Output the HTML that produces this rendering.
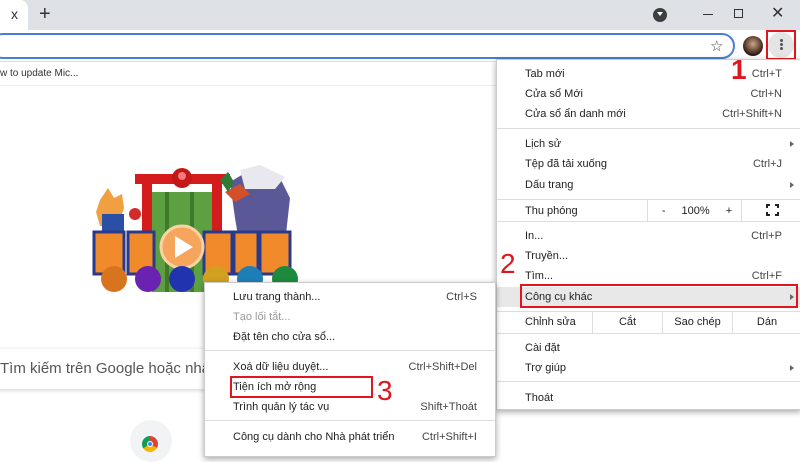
<!DOCTYPE html>
<html><head><meta charset="utf-8">
<style>
*{margin:0;padding:0;box-sizing:border-box}
body{width:800px;height:450px;overflow:hidden;background:#fff;font-family:"Liberation Sans","DejaVu Sans",sans-serif;font-size:11px;color:#202124;position:relative}
.a{position:absolute;white-space:nowrap}
.menu{position:absolute;background:#fff;box-shadow:0 2px 6px rgba(0,0,0,.35);border:1px solid #ccc}
.it{position:absolute;left:0;right:0;height:20px;line-height:20px}
.it .l{position:absolute;left:28px}
.it .r{position:absolute;right:18px;color:#444}
.sep{position:absolute;left:0;right:0;height:1px;background:#ddd}
.tri{position:absolute;right:6px;top:7px;width:0;height:0;border-left:4px solid #666;border-top:3px solid transparent;border-bottom:3px solid transparent}
.red{position:absolute;border:2px solid #e0161e}
.num{position:absolute;color:#e0161e;font-size:28px;line-height:28px}
</style></head><body>
<div class="a" style="left:0;top:0;width:800px;height:30px;background:#dee1e6"></div>
<div class="a" style="left:0;top:0;width:28px;height:30px;background:#fff;border-radius:0 8px 0 0"></div>
<div class="a" style="left:11px;top:6px;font-size:14px;color:#333">x</div>
<div class="a" style="left:39px;top:3px;font-size:20px;color:#333">+</div>
<div class="a" style="left:653px;top:8px;width:14px;height:14px;border-radius:50%;background:#3c4043"></div>
<div class="a" style="left:657px;top:12px;width:0;height:0;border-left:3px solid transparent;border-right:3px solid transparent;border-top:4px solid #fff"></div>
<div class="a" style="left:703px;top:14px;width:10px;height:1px;background:#333"></div>
<div class="a" style="left:734px;top:9px;width:9px;height:9px;border:1px solid #333"></div>
<div class="a" style="left:771px;top:3px;font-size:16px;color:#333">✕</div>
<div class="a" style="left:0;top:30px;width:800px;height:32px;background:#fff;border-bottom:1px solid #ddd"></div>
<div class="a" style="left:-10px;top:33px;width:745px;height:26px;border:2px solid #4a7fcf;border-radius:13px;background:#fff"></div>
<div class="a" style="left:710px;top:37px;font-size:15px;color:#444">☆</div>
<div class="a" style="left:743px;top:36px;width:20px;height:20px;border-radius:50%;background:radial-gradient(circle at 50% 40%,#c9a88a 0,#6b4a36 45%,#2a1c16 70%)"></div>
<div class="a" style="left:768px;top:32px;width:26px;height:26px;background:#e4e4e4;border-radius:50%"></div>
<div class="a" style="left:780px;top:39px;width:3px;height:3px;background:#555;border-radius:50%;box-shadow:0 4px 0 #555,0 8px 0 #555"></div>
<div class="red" style="left:766px;top:30px;width:30px;height:30px"></div>
<div class="a" style="left:0;top:68px;font-size:10px;color:#333">w to update Mic...</div>
<div class="a" style="left:0;top:85px;width:500px;height:1px;background:#eee"></div>
<svg class="a" style="left:80px;top:162px" width="240" height="135" viewBox="0 0 240 135">
<rect x="55" y="12" width="95" height="10" fill="#d51c1c"/>
<rect x="62" y="22" width="10" height="105" fill="#d51c1c"/>
<rect x="132" y="22" width="10" height="105" fill="#d51c1c"/>
<rect x="72" y="30" width="60" height="100" fill="#5da041"/>
<rect x="85" y="30" width="4" height="100" fill="#3d7a2a"/><rect x="110" y="30" width="4" height="100" fill="#3d7a2a"/>
<circle cx="102" cy="16" r="10" fill="#c41818"/><circle cx="102" cy="14" r="4" fill="#f37a7a"/>
<path d="M20 38 l8 -12 6 10 8 -4 2 14 -6 18 -18 0 -4 -14z" fill="#f0a040"/>
<rect x="22" y="52" width="22" height="18" fill="#2c4fa6"/>
<circle cx="55" cy="52" r="6" fill="#d52a2a"/>
<path d="M150 20 l20 -12 30 8 10 20 -5 45 -25 15 -20 -10 -5 -30z" fill="#5a5896"/>
<path d="M160 8 l20 -5 25 12 -10 12 -30 0z" fill="#e8e8ee"/>
<path d="M145 30 l15 -8 10 10 -15 8z" fill="#d4502a"/>
<path d="M140 18 l8 -8 6 10 -6 10z" fill="#2f7a35"/>
<g fill="#f08a2a" stroke="#2a3a8a" stroke-width="3">
<rect x="14" y="70" width="30" height="42"/><rect x="48" y="70" width="26" height="42"/>
<rect x="124" y="70" width="28" height="42"/><rect x="154" y="70" width="24" height="42"/><rect x="180" y="70" width="30" height="42"/></g>
<circle cx="102" cy="85" r="21" fill="#f5a55c" stroke="#fbd2a4" stroke-width="3"/>
<path d="M95 74 L113 85 L95 96z" fill="#fff"/>
<circle cx="34" cy="117" r="13" fill="#d8741e"/><circle cx="68" cy="117" r="13" fill="#6a22b0"/>
<circle cx="102" cy="117" r="13" fill="#2233b0"/><circle cx="136" cy="117" r="13" fill="#d3a020"/>
<circle cx="170" cy="117" r="13" fill="#1e7fb8"/><circle cx="205" cy="117" r="13" fill="#1e8a3e"/>
</svg>
<div class="a" style="left:-10px;top:349px;width:225px;height:40px;background:#fff;box-shadow:0 1px 4px rgba(0,0,0,.2);border-radius:4px"></div>
<div class="a" style="left:0;top:360px;font-size:15px;color:#555">Tìm kiếm trên Google hoặc nhập</div>
<div class="a" style="left:130px;top:420px;width:42px;height:42px;border-radius:50%;background:#f1f3f4"></div>
<div class="a" style="left:142px;top:436px;width:16px;height:16px;border-radius:50%;background:conic-gradient(#db4437 0 33%,#f4b400 0 66%,#0f9d58 0);"></div>
<div class="a" style="left:147px;top:441px;width:6px;height:6px;border-radius:50%;background:#4285f4;border:1px solid #fff"></div>
<div class="menu" style="left:496px;top:59px;width:305px;height:351px">
 <div class="it" style="top:4px"><span class="l">Tab mới</span><span class="r">Ctrl+T</span></div>
 <div class="it" style="top:24px"><span class="l">Cửa sổ Mới</span><span class="r">Ctrl+N</span></div>
 <div class="it" style="top:44px"><span class="l">Cửa sổ ẩn danh mới</span><span class="r">Ctrl+Shift+N</span></div>
 <div class="sep" style="top:68px"></div>
 <div class="it" style="top:74px"><span class="l">Lịch sử</span><span class="tri"></span></div>
 <div class="it" style="top:94px"><span class="l">Tệp đã tải xuống</span><span class="r">Ctrl+J</span></div>
 <div class="it" style="top:115px"><span class="l">Dấu trang</span><span class="tri"></span></div>
 <div class="sep" style="top:139px"></div>
 <div class="it" style="top:141px"><span class="l">Thu phóng</span></div>
 <div class="a" style="left:150px;top:140px;width:1px;height:21px;background:#ddd"></div>
 <div class="a" style="left:244px;top:140px;width:1px;height:21px;background:#ddd"></div>
 <div class="a" style="left:160px;top:145px;width:80px;text-align:center;line-height:12px"><span style="margin-right:16px">-</span>100%<span style="margin-left:16px">+</span></div>
 <svg class="a" style="left:269px;top:144px" width="13" height="12" viewBox="0 0 13 12" fill="none" stroke="#222" stroke-width="2"><path d="M1 4V1H4M9 1H12V4M12 8V11H9M4 11H1V8"/></svg>
 <div class="sep" style="top:161px"></div>
 <div class="it" style="top:166px"><span class="l">In...</span><span class="r">Ctrl+P</span></div>
 <div class="it" style="top:186px"><span class="l">Truyền...</span></div>
 <div class="it" style="top:206px"><span class="l">Tìm...</span><span class="r">Ctrl+F</span></div>
 <div class="it" style="top:227px;background:#e8e8e8"><span class="l">Công cụ khác</span><span class="tri"></span></div>
 <div class="sep" style="top:251px"></div>
 <div class="it" style="top:252px"><span class="l">Chỉnh sửa</span></div>
 <div class="a" style="left:95px;top:252px;width:1px;height:21px;background:#ddd"></div>
 <div class="a" style="left:165px;top:252px;width:1px;height:21px;background:#ddd"></div>
 <div class="a" style="left:235px;top:252px;width:1px;height:21px;background:#ddd"></div>
 <div class="a" style="left:96px;top:256px;width:69px;text-align:center">Cắt</div>
 <div class="a" style="left:166px;top:256px;width:69px;text-align:center">Sao chép</div>
 <div class="a" style="left:236px;top:256px;width:68px;text-align:center">Dán</div>
 <div class="sep" style="top:273px"></div>
 <div class="it" style="top:278px"><span class="l">Cài đặt</span></div>
 <div class="it" style="top:298px"><span class="l">Trợ giúp</span><span class="tri"></span></div>
 <div class="sep" style="top:321px"></div>
 <div class="it" style="top:328px"><span class="l">Thoát</span></div>
</div>
<div class="red" style="left:520px;top:284px;width:278px;height:24px"></div>
<div class="menu" style="left:204px;top:282px;width:292px;height:175px">
 <div class="it" style="top:4px"><span class="l">Lưu trang thành...</span><span class="r">Ctrl+S</span></div>
 <div class="it" style="top:24px;color:#999"><span class="l">Tạo lối tắt...</span></div>
 <div class="it" style="top:44px"><span class="l">Đặt tên cho cửa sổ...</span></div>
 <div class="sep" style="top:67px"></div>
 <div class="it" style="top:74px"><span class="l">Xoá dữ liệu duyệt...</span><span class="r">Ctrl+Shift+Del</span></div>
 <div class="it" style="top:94px"><span class="l">Tiện ích mở rộng</span></div>
 <div class="it" style="top:114px"><span class="l">Trình quản lý tác vụ</span><span class="r">Shift+Thoát</span></div>
 <div class="sep" style="top:137px"></div>
 <div class="it" style="top:144px"><span class="l">Công cụ dành cho Nhà phát triển</span><span class="r">Ctrl+Shift+I</span></div>
</div>
<div class="red" style="left:230px;top:376px;width:143px;height:22px"></div>
<div class="num" style="left:731px;top:56px;font-weight:bold">1</div>
<div class="num" style="left:500px;top:250px">2</div>
<div class="num" style="left:377px;top:377px">3</div>
</body></html>
